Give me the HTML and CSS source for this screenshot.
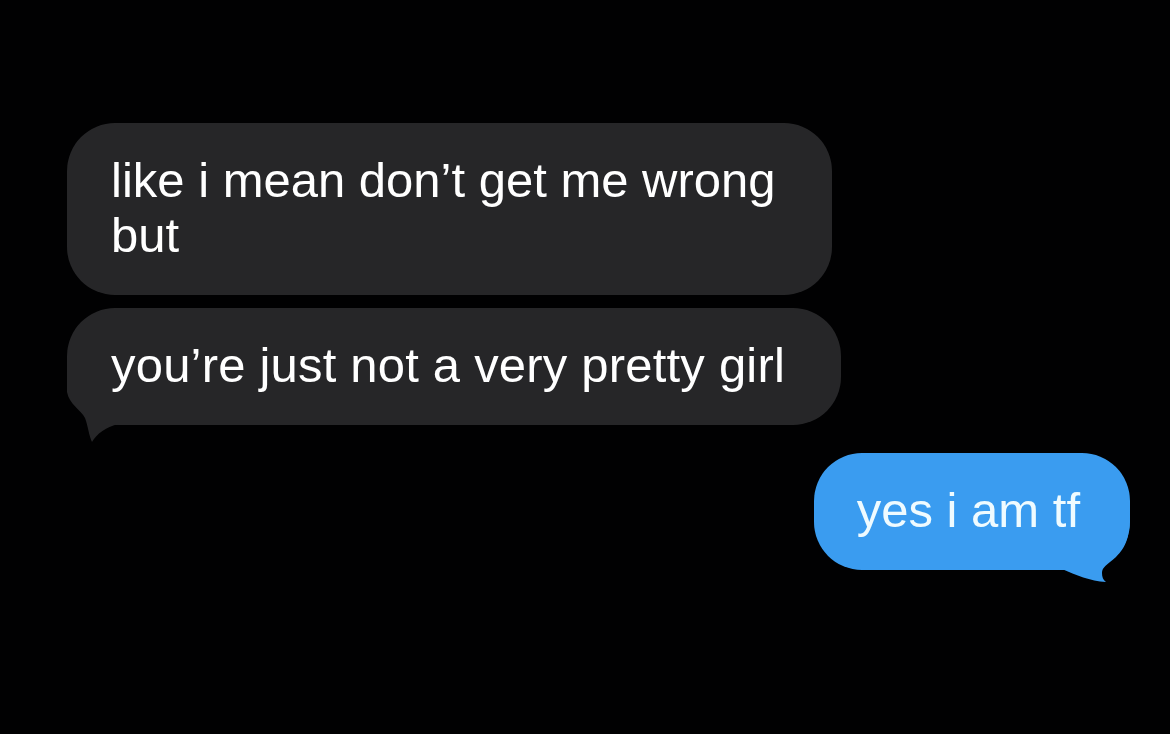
FILE: index.html
```html
<!DOCTYPE html>
<html lang="en">
<head>
<meta charset="utf-8">
<title>Messages</title>
<link rel="stylesheet" href="styles.css">
</head>
<body>
<main class="thread">
  <div class="bubble received"><span class="text">like i mean don’t get me wrong but</span></div>
  <div class="bubble received wide"><span class="text">you’re just not a very pretty girl</span><svg class="tail tail-left" width="60" height="80" viewBox="0 60 60 80" aria-hidden="true"><path d="M0 60 L0 84 C2 96 14 102 18 110 C21 118 22 128 25 134 C30 126 38 119 52 116 L52 60 Z"/></svg></div>
  <div class="bubble sent"><span class="text">yes i am tf</span><svg class="tail tail-right" width="70" height="80" viewBox="246 60 70 80" aria-hidden="true"><path d="M316 60 C316 84 312 94 302 104 C293 112 288 114 288 120 C288 124 289 127 292 129 C276 128 262 122 248 116 L248 60 Z"/></svg></div>
</main>
</body>
</html>
```
FILE: styles.css
```css
html, body {
  margin: 0;
  padding: 0;
  background: #010102;
}

body {
  width: 1170px;
  height: 734px;
  overflow: hidden;
  font-family: "Liberation Sans", Arial, sans-serif;
}

.thread {
  display: flex;
  flex-direction: column;
  align-items: flex-start;
  gap: 13px;
  padding: 123px 40px 0 67px;
}

.bubble {
  position: relative;
  box-sizing: border-box;
  max-width: 765px;
  padding: 30px 52px 32px 44px;
  border-radius: 48px;
  font-size: 49px;
  line-height: 55px;
}

.text {
  position: relative;
  z-index: 1;
}

.received {
  background: #262628;
  color: #ffffff;
}

.wide {
  max-width: 780px;
  padding-right: 56px;
  letter-spacing: 0.2px;
}

.sent {
  align-self: flex-end;
  margin-top: 15px;
  padding: 30px 50px 32px 43px;
  background: #3a9cf0;
  color: #effbff;
}

.tail {
  position: absolute;
  top: 60px;
  z-index: 0;
}

.tail-left {
  left: 0;
  fill: #262628;
}

.tail-right {
  right: 0;
  fill: #3a9cf0;
}
```
